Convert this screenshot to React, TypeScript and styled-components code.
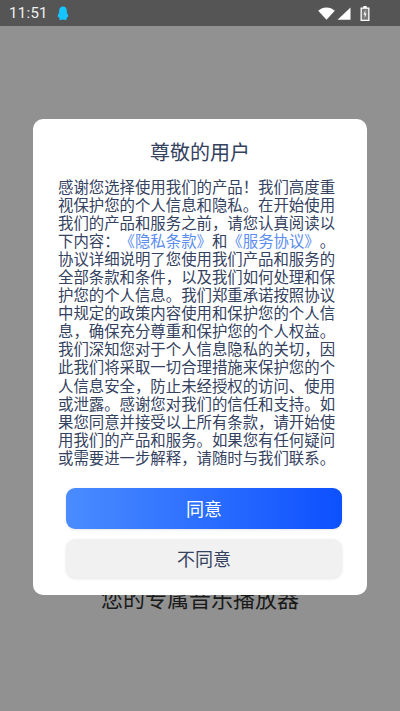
import React from "react";
import styled, { createGlobalStyle } from "styled-components";

const GlobalStyle = createGlobalStyle`
  html, body, #root {
    margin: 0;
    padding: 0;
    height: 100%;
  }
  body {
    font-family: "Noto Sans CJK SC", "Noto Sans", sans-serif;
    background: #919191;
    overflow: hidden;
  }
`;

const Screen = styled.div`
  width: 400px;
  height: 711px;
  display: flex;
  flex-direction: column;
  position: relative;
  background: #919191;
`;

const StatusBar = styled.div`
  height: 26px;
  flex: none;
  display: flex;
  align-items: center;
  padding: 0 30px 0 9px;
  background: #555555;
  color: #f0f0f0;
`;

const Clock = styled.span`
  font-family: Roboto, sans-serif;
  font-size: 15px;
  letter-spacing: 0.3px;
`;

const StatusIcons = styled.div`
  margin-left: auto;
  display: flex;
  align-items: center;
  gap: 2px;
`;

const Backdrop = styled.div`
  flex: 1;
  display: flex;
  justify-content: center;
  align-items: flex-end;
  padding-bottom: 101px;
`;

const Slogan = styled.div`
  font-size: 22px;
  line-height: 26px;
  color: #1a1a1a;
`;

const Dialog = styled.div`
  position: absolute;
  left: 33px;
  top: 119px;
  width: 334px;
  height: 476px;
  box-sizing: border-box;
  padding: 21px 25px 0;
  display: flex;
  flex-direction: column;
  background: #ffffff;
  border-radius: 10px;
`;

const Title = styled.h2`
  margin: 0 0 13px;
  font-size: 20px;
  line-height: 24px;
  font-weight: 400;
  text-align: center;
  color: #34425f;
`;

const Body = styled.p`
  margin: 0;
  font-size: 15.4px;
  line-height: 18.05px;
  color: #34425f;
  word-break: break-all;
  text-spacing-trim: space-all;
`;

const Link = styled.span`
  color: #5b8def;
`;

const Actions = styled.div`
  margin-top: 22px;
  padding-left: 8px;
  display: flex;
  flex-direction: column;
  gap: 10px;
`;

const Button = styled.div<{ $primary?: boolean }>`
  height: ${(p) => (p.$primary ? "41px" : "39px")};
  display: flex;
  align-items: center;
  justify-content: center;
  border-radius: 9px;
  font-size: 18px;
  color: ${(p) => (p.$primary ? "#ffffff" : "#34425f")};
  background: ${(p) =>
    p.$primary ? "linear-gradient(90deg, #4a8cff, #0d50ff)" : "#f1f1f1"};
  box-shadow: 0 1px 3px rgba(0, 0, 0, 0.1);
`;

const App = () => {
  return (
    <Screen>
      <GlobalStyle />
      <StatusBar>
        <Clock>11:51</Clock>
        <svg width="12" height="15" viewBox="0 0 12 15" style={{ marginLeft: 9 }}>
          <path
            d="M6 .5C3.4.5 2.2 2.4 2.2 4.6v1.6L.8 9.6c-.4 1.100 0 1.800.9 1.200.1.800.5 1.400 1 1.900-.7.400-.6 1.400 1 1.400 1 0 1.700-.3 2.300-.5.600.2 1.300.5 2.300.5 1.600 0 1.700-1 1-1.400.5-.5.9-1.100 1-1.900.9.600 1.300-.1.900-1.200L9.800 6.200V4.600C9.800 2.400 8.600.5 6 .5z"
            fill="#16c5ff"
          />
        </svg>
        <StatusIcons>
          <svg width="17" height="13" viewBox="0 0 17 13">
            <path d="M.2 3.800C2.500 1.700 5.300.5 8.500.5s6 1.200 8.300 3.300L8.500 12.800z" fill="#fff" />
          </svg>
          <svg width="14" height="13" viewBox="0 0 14 13">
            <path d="M13.500.5v12.300H.5z" fill="#fff" />
          </svg>
          <svg width="10" height="15" viewBox="0 0 10 15" style={{ marginLeft: 7 }}>
            <path d="M3.300 0h3.400v1.500H9.500V15H.5V1.500h2.800z" fill="#fff" />
            <path d="M1.800 2.800h6.400v10.900H1.800z" fill="#7a7a7a" />
            <path d="M5.400 4 3.500 8.400h1.200V12l1.800-4.600H5.300z" fill="#fff" />
          </svg>
        </StatusIcons>
      </StatusBar>
      <Backdrop>
        <Slogan>您的专属音乐播放器</Slogan>
      </Backdrop>
      <Dialog>
        <Title>尊敬的用户</Title>
        <Body>
          {"感谢您选择使用我们的产品\uFF01我们高度重视保护您的个人信息和隐私。在开始使用我们的产品和服务之前\uFF0C请您认真阅读以下内容\uFF1A"}
          <Link>《隐私条款》</Link>和<Link>《服务协议》</Link>
          {"。协议详细说明了您使用我们产品和服务的全部条款和条件\uFF0C以及我们如何处理和保护您的个人信息。我们郑重承诺按照协议中规定的政策内容使用和保护您的个人信息\uFF0C确保充分尊重和保护您的个人权益。我们深知您对于个人信息隐私的关切\uFF0C因此我们将采取一切合理措施来保护您的个人信息安全\uFF0C防止未经授权的访问、使用或泄露。感谢您对我们的信任和支持。如果您同意并接受以上所有条款\uFF0C请开始使用我们的产品和服务。如果您有任何疑问或需要进一步解释\uFF0C请随时与我们联系。"}
        </Body>
        <Actions>
          <Button $primary>同意</Button>
          <Button>不同意</Button>
        </Actions>
      </Dialog>
    </Screen>
  );
};

export default App;
